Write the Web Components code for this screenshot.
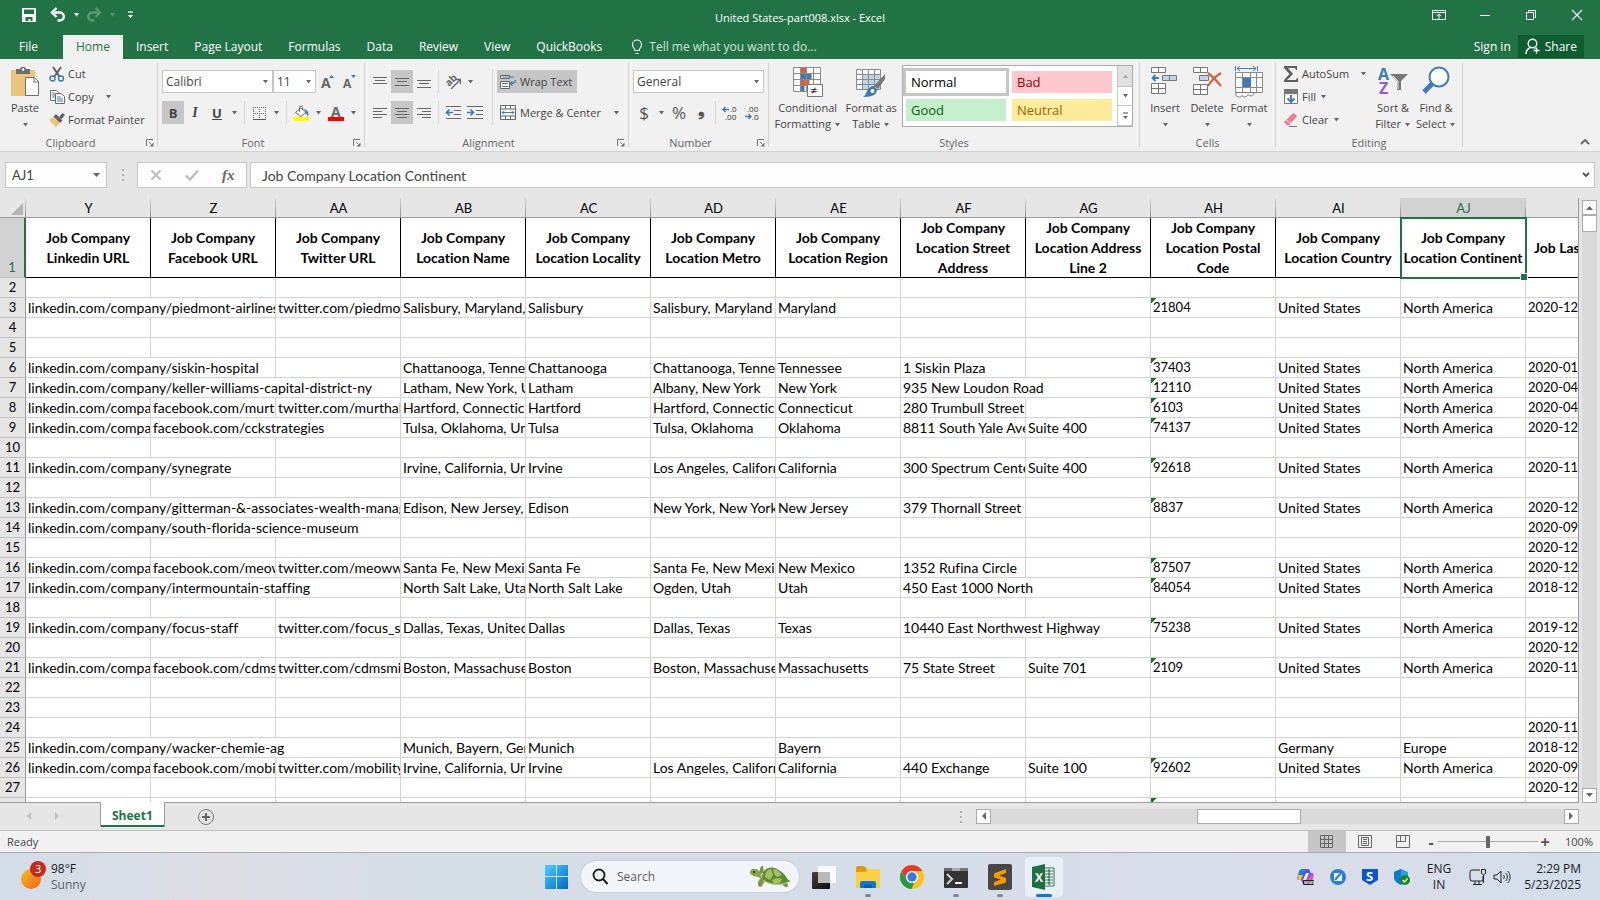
<!DOCTYPE html>
<html lang="en">
<head>
<meta charset="utf-8">
<title>United States-part008.xlsx - Excel</title>
<style>
html, body {
  height: 100%;
  margin: 0;
}
body {
  --ui: "Open Sans", "Noto Sans", sans-serif;
  --cell: Lato, "Open Sans", sans-serif;
  --green: #217346;
  font: 12px/16px var(--ui);
  color: #444;
  overflow: hidden;
}
</style>
</head>
<body>
<excel-window></excel-window>

<script>
const ICONS = {
  save: [16, 16, '<path d="M1 1h14v14H1z" fill="#fff"/><path d="M3 2.500h10v4.500H3zM4.500 10h7v4h-2v-2h-2v2h-3z" fill="#217346"/>'],
  undo: [16, 16, '<path d="M1.500 5.500H9.500a4.300 4 0 0 1 0 8H7.500" fill="none" stroke="#fff" stroke-width="2.400"/><path d="M6.500 1L2 5.500L6.500 10" fill="none" stroke="#fff" stroke-width="2.400"/>'],
  redo: [16, 16, '<g transform="matrix(-1 0 0 1 16 0)" opacity=".26" fill="none" stroke="#fff" stroke-width="2.400"><path d="M1.500 5.500H9.500a4.300 4 0 0 1 0 8H7.500M6.500 1L2 5.500L6.500 10"/></g>'],
  caret: [7, 4, '<path d="M1 0h5L3.500 3.500z" fill="currentColor"/>'],
  more: [7, 8, '<path d="M1 1h5" stroke="currentColor" stroke-width="1.200"/><path d="M1 4h5L3.500 7z" fill="currentColor"/>'],
  ribbonopts: [14, 12, '<path d="M.500 1.500h13v9H.500zM.500 3.500h13M7 10V5M5 7l2-2 2 2" fill="none" stroke="#fff"/>'],
  minimise: [12, 12, '<path d="M1 6.500h10" stroke="#fff"/>'],
  restore: [12, 12, '<path d="M1.500 3.500h7v7h-7zM3.500 3.500v-2h7v7h-2" fill="none" stroke="#fff"/>'],
  close: [12, 12, '<path d="M1 1l10 10M11 1L1 11" stroke="#fff" stroke-width="1.100"/>'],
  bulb: [12, 16, '<path d="M4 11.500c0-2-2.500-2.800-2.500-6a4.500 4.500 0 0 1 9 0c0 3.200-2.500 4-2.500 6zM4.500 14.500h3" fill="none" stroke="#fff" stroke-width="1.100"/>'],
  person: [16, 17, '<circle cx="7.500" cy="5.500" r="4.300" fill="none" stroke="#fff" stroke-width="1.400"/><path d="M1 16c0-4 2-5.500 4.500-6.500M9 9.500l1.500 1M11.500 9.500v6M8.500 12.500h6" fill="none" stroke="#fff" stroke-width="1.400"/>'],
  paste: [30, 32, '<path d="M1 4h24v26H1z" fill="#ecc57d"/><path d="M6 3h4c0-3 6-3 6 0h4v5H6z" fill="#6e6e6e"/><circle cx="13" cy="3.500" r="1.300" fill="#fff"/><path d="M15.500 11.500h9l4 4v14h-13z" fill="#fff" stroke="#6e6e6e"/><path d="M24 11.500v4.500h4.500" fill="none" stroke="#6e6e6e"/>'],
  cut: [16, 16, '<path d="M4 1l6.500 9.500M12 1L5.500 10.500" stroke="#5f5f5f" stroke-width="2"/><circle cx="3.500" cy="12.500" r="2.500" fill="none" stroke="#3f7ab3" stroke-width="1.400"/><circle cx="12" cy="12.500" r="2.500" fill="none" stroke="#3f7ab3" stroke-width="1.400"/>'],
  copy: [16, 16, '<path d="M1.500 1.500h6l2 2v8h-8z" fill="#fff" stroke="#6a6a6a"/><path d="M3 4h3M3 6h3M3 8h3" stroke="#3f7ab3"/><path d="M6.500 4.500h6l3 3v7h-9z" fill="#fff" stroke="#6a6a6a"/><path d="M8 8h4M8 10h6M8 12h6" stroke="#3f7ab3"/>'],
  painter: [16, 16, '<path d="M0 7.500l5-3 6 6-4 5z" fill="#ecc57d"/><path d="M4.500 4.500l2.500-2.500 6.500 6.500-2.500 2.500z" fill="#5f5f5f"/><path d="M10 5l3.500-4L16 3l-3.500 4z" fill="#5f5f5f"/>'],
  launcher: [8, 8, '<path d="M.500 7V.500H7M3 3l2.500 2.500" fill="none" stroke="#777"/><path d="M7.500 3.500v4h-4z" fill="#777"/>'],
  grow: [14, 16, '<text x="1" y="14" font-size="14" font-weight="700" fill="#666">A</text><path d="M9 4l2.500-3L14 4z" fill="#3f7ab3"/>'],
  shrink: [14, 16, '<text x="1" y="14" font-size="12" font-weight="700" fill="#666">A</text><path d="M9 1h5l-2.500 3z" fill="#3f7ab3"/>'],
  border: [14, 14, '<path d="M1 1.500h13M1 7.500h13M1.500 1v12M7.500 1v12M13.500 1v12" stroke="#666" stroke-dasharray="1 1"/><path d="M1 13.500h13" stroke="#555"/>'],
  bucket: [17, 16, '<path d="M7.500 3L2.500 7.500 8 11.500l5-4.500z" fill="#fff" stroke="#666"/><path d="M6.500 7V2.500a1.500 1.500 0 0 1 3 0V5" fill="none" stroke="#666"/><path d="M10.500 4c4 .500 6 3 4.500 8-1-3-2-3.500-3-4l1.500-1.500z" fill="#3f7ab3"/><path d="M0 12h16v4H0z" fill="#ff0"/>'],
  fontcolor: [16, 16, '<text x="3" y="12" font-size="14" font-weight="700" fill="#666">A</text><path d="M0 12h16v4H0z" fill="#f00"/>'],
  atop: [14, 14, '<path d="M0 2.500h14M2 5.500h10M0 8.500h14" stroke="#666"/>'],
  amid: [14, 14, '<path d="M0 3.500h14M2 6.500h10M0 10.500h14" stroke="#666"/>'],
  abot: [14, 14, '<path d="M0 5.500h14M2 8.500h10M0 12.500h14" stroke="#666"/>'],
  left: [14, 14, '<path d="M0 2.500h14M0 5.500h9M0 8.500h14M0 11.500h9" stroke="#666"/>'],
  center: [14, 14, '<path d="M0 2.500h14M2 5.500h10M0 8.500h14M2 11.500h10" stroke="#666"/>'],
  right: [14, 14, '<path d="M0 2.500h14M5 5.500h9M0 8.500h14M5 11.500h9" stroke="#666"/>'],
  orient: [16, 16, '<text x="1" y="10" font-size="10" font-weight="700" fill="#666" transform="rotate(-45 6 8)">ab</text><path d="M6 15l9-9M11 5.500h4.500V10" fill="none" stroke="#666" stroke-width="1.300"/>'],
  outdent: [16, 14, '<path d="M1 .500h15M9 4.500h7M9 8.500h7M1 12.500h15" stroke="#666"/><path d="M1 6.500h7M4.500 3.500l-3 3 3 3" fill="none" stroke="#3f7ab3" stroke-width="1.700"/>'],
  indent: [16, 14, '<path d="M0 .500h16M9 4.500h7M9 8.500h7M0 12.500h16" stroke="#666"/><path d="M0 6.500h7M3.500 3.500l3 3-3 3" fill="none" stroke="#3f7ab3" stroke-width="1.700"/>'],
  wrap: [16, 16, '<path d="M.500 1.500h9v3h-9zM.500 7.500h9v7h-9z" fill="#fff" stroke="#666"/><path d="M2 3h12M2 9.500h6M2 12.500h6" stroke="#3f7ab3"/><path d="M15.500 6c0 3-2 3.500-5 3.500M12.500 7.500l-2.500 2 2.500 2" fill="none" stroke="#3f7ab3" stroke-width="1.300"/>'],
  merge: [16, 16, '<path d="M.500.500h15v14H.500zM.500 4h15M.500 11h15M5.500 0v4M10.500 0v4M5.500 11v4M10.500 11v4" fill="#fff" stroke="#666"/><path d="M2 7.500h12M4 5.500l-2 2 2 2M12 5.500l2 2-2 2" fill="none" stroke="#3f7ab3"/>'],
  incdec: [16, 16, '<path d="M1 4.500h6M3.500 2L1 4.500 3.500 7" fill="none" stroke="#3f7ab3" stroke-width="1.400"/><text x="8" y="7" font-size="8" fill="#333">.0</text><text x="3" y="15" font-size="8" fill="#333">.00</text>'],
  decdec: [16, 16, '<path d="M1 11.500h6M4.500 9L7 11.500 4.500 14" fill="none" stroke="#3f7ab3" stroke-width="1.400"/><text x="3" y="7" font-size="8" fill="#333">.00</text><text x="8" y="15" font-size="8" fill="#333">.0</text>'],
  cond: [32, 32, '<path d="M1.500 1.500h27v24h-27z" fill="#fff"/><path d="M8.500 2h6v6h-6zM8.500 14h9v5h-9z" fill="#dc5f3c"/><path d="M8.500 8h11v6h-11zM8.500 19h4v6h-4z" fill="#3f7ab3"/><path d="M1.500 1.500h27v24h-27zM1.500 7.500h27M1.500 13.500h27M1.500 19.500h27M8.500 1.500v24M14.500 1.500v24M21.500 1.500v24" fill="none" stroke="#8b8b8b"/><path d="M15.500 18.500h15v12h-15z" fill="#fff" stroke="#777"/><text x="18.500" y="29" font-size="12" fill="#222">≠</text>'],
  fmttable: [32, 32, '<path d="M1.500 3.500h24v20h-24z" fill="#fff"/><path d="M8 9h17v14H8z" fill="#bfd3ea"/><path d="M1.500 3.500h24v20h-24zM1.500 8.500h24M1.500 13.500h24M1.500 18.500h24M7.500 3.500v20M13.500 3.500v20M19.500 3.500v20" fill="none" stroke="#8b8b8b"/><path d="M30 8v5l-7 10-4-3z" fill="#777"/><path d="M18 20l4 3c0 5-3 8-14 8 4-2 3-9 10-11z" fill="#3f7ab3"/><circle cx="17.500" cy="25" r="2" fill="#fff"/>'],
  insert: [30, 30, '<path d="M1.500 1.500h14v5h-14zM8.500 1.500v5M1.500 17.500h14v10h-14zM8.500 17.500v10M1.500 22.500h14" fill="#fff" stroke="#777"/><path d="M12.500 9.500h14v5h-14zM19.500 9.500v5" fill="#bfd3ea" stroke="#777"/><path d="M2 12h7M5.500 9L2.500 12l3 3" fill="none" stroke="#3f7ab3" stroke-width="1.800"/>'],
  delete: [30, 30, '<path d="M1.500 1.500h14v5h-14zM8.500 1.500v5M1.500 18.500h14v10h-14zM8.500 18.500v10M1.500 23.500h14" fill="#fff" stroke="#777"/><path d="M7.500 9.500h9v5h-9z" fill="#bfd3ea" stroke="#777"/><path d="M16 7c4 3 9 8 13 13M29 7c-5 3-10 8-13 13" fill="none" stroke="#dc5f3c" stroke-width="2.200"/>'],
  format: [30, 32, '<path d="M1.500 0v5M23.500 0v5M3 2.500h19M6 0L3 2.500 6 5M19 0l3 2.500L19 5" fill="none" stroke="#3f7ab3"/><path d="M1.500 6.500h27v20h-27zM1.500 11.500h27M1.500 21.500h27M8.500 6.500v20M16.500 6.500v20M22.500 6.500v20" fill="#fff" stroke="#8b8b8b"/><path d="M9 12h8v9H9z" fill="#3f7ab3"/><path d="M2 26.500h18c0 4-5 4-6 2-1 3-5 3-6 1-1 2-4 2-6 0z" fill="#fff" stroke="#777"/>'],
  sigma: [16, 16, '<path d="M1 0h13v4h-1l-1-2H5l5 6-6 6h9l1-2h1v4H1v-2l5.500-6L1 2z" fill="#5f5f5f"/>'],
  fill: [16, 16, '<path d="M1.500 1.500h13v13h-13z" fill="#fff" stroke="#777"/><path d="M1 0h14v5H1z" fill="#777"/><path d="M8 6v7M4.500 9.500L8 13l3.500-3.500" fill="none" stroke="#3f7ab3" stroke-width="2"/>'],
  clear: [16, 16, '<path d="M3.500 7.500L9 2c1-1 2-1 3 0l1.500 1.500c.500.500.500 1 0 1.500L8 11z" fill="#e8808f"/><path d="M3 8l4.500 4L6 13.500H4L1.500 11c-.500-.500-.500-1 0-1.500z" fill="#e8808f"/><path d="M6 14.500h8" stroke="#777"/>'],
  sort: [30, 30, '<text x="0" y="14" font-size="16" font-weight="700" fill="#3f7ab3">A</text><text x="1" y="28" font-size="16" font-weight="700" fill="#9260b8">Z</text><path d="M12 8h18l-7 7v9h-4v-9z" fill="#777"/><path d="M15 10l5 5v8" fill="none" stroke="#f1f1f1"/>'],
  find: [30, 30, '<path d="M11 18L3 26" stroke="#3f7ab3" stroke-width="5"/><circle cx="18" cy="11" r="9.500" fill="#fff" stroke="#3f7ab3" stroke-width="2"/>'],
  up: [10, 6, '<path d="M1 5l4-4 4 4" fill="none" stroke="#666" stroke-width="1.800"/>'],
  down: [8, 6, '<path d="M1 1l3 3 3-3" fill="none" stroke="#555" stroke-width="1.900"/>'],
  cancel: [12, 12, '<path d="M1.500 1.500l9 9M10.500 1.500l-9 9" stroke="#bdbdbd" stroke-width="2"/>'],
  enter: [14, 12, '<path d="M1 6.500l4 4L13 1.500" fill="none" stroke="#bdbdbd" stroke-width="2.400"/>'],
  corner: [14, 14, '<path d="M13 1v12H1z" fill="#b4b4b4"/>'],
  tup: [7, 5, '<path d="M0 5h7L3.500 1z" fill="#666"/>'],
  tdown: [7, 5, '<path d="M0 0h7L3.500 4z" fill="#666"/>'],
  tleft: [5, 9, '<path d="M5 0v8L1 4z" fill="currentColor"/>'],
  tright: [5, 9, '<path d="M0 0v8l4-4z" fill="currentColor"/>'],
  dots: [3, 12, '<path d="M1 0h2v2H1zM1 5h2v2H1zM1 10h2v2H1z" fill="#b0b0b0"/>'],
  add: [18, 18, '<circle cx="9" cy="9" r="7.500" fill="none" stroke="#777"/><path d="M9 5v8M5 9h8" stroke="#666" stroke-width="2"/>'],
  vnormal: [14, 14, '<path d="M.500.500h12v12H.500zM.500 4.500h12M.500 8.500h12M4.500.500v12M8.500.500v12" fill="none" stroke="#666"/>'],
  vpage: [14, 14, '<path d="M.500.500h13v12H.500zM3.500 2.500h7v8h-7zM5 4.500h4M5 6.500h4M5 8.500h4" fill="none" stroke="#666"/>'],
  vbreak: [14, 14, '<path d="M.500.500h13v12H.500zM4.500.500v6M9.500.500v6M.500 6.500h9" fill="none" stroke="#666"/>'],
  weather: [30, 32, '<defs><linearGradient id="g" x2="1" y2="1"><stop stop-color="#f5bd2c"/><stop offset="1" stop-color="#f2650f"/></linearGradient></defs><circle cx="11" cy="18" r="10" fill="url(#g)"/><circle cx="18" cy="8" r="8" fill="#c42b1c"/><text x="15" y="12" font-size="11" fill="#fff">3</text>'],
  windows: [24, 24, '<defs><linearGradient id="g" x2="1" y2="1"><stop stop-color="#4fd0fb"/><stop offset="1" stop-color="#0067c4"/></linearGradient></defs><path d="M1 0h11v11H1zM13 0h11v11H13zM1 12h11v12H1zM13 12h11v12H13z" fill="url(#g)"/>'],
  search: [16, 18, '<circle cx="7" cy="7" r="5.500" fill="none" stroke="#1e1e1e" stroke-width="1.800"/><path d="M11 11l4.500 5" stroke="#1e1e1e" stroke-width="2"/>'],
  turtle: [42, 24, '<path d="M12 8C9 3 2 2 1 7c0 4 5 4 8 5l4 2z" fill="#8ba04a"/><path d="M11 9C10 4 12 0 14 1l1 7zM12 13c-4 3-4 8-1 9 3 0 3-5 6-7zM32 17c2 4 5 7 7 4 0-3-2-4-5-6zM36 14l6 2-5 2z" fill="#7f9444"/><path d="M13 13C13 4 21 0 28 4c6 3 9 7 12 12-4 4-20 7-27-3z" fill="#5c8a32"/><path d="M16 12c0-5 3-8 6-8l2 6-3 5zM24 4c4 0 7 3 9 6l-5 2-3-3zM23 15l5-2 5 1-2 4-6 1z" fill="#a5c063"/><path d="M14 15c7 5 17 6 25 2" fill="none" stroke="#c9ce86"/><circle cx="5" cy="7" r="1" fill="#222"/>'],
  taskview: [26, 26, '<defs><linearGradient id="g" x2="1" y2="1"><stop stop-color="#444"/><stop offset="1" stop-color="#0b0b0b"/></linearGradient></defs><rect x="1" y="8" width="18" height="17" rx="1" fill="url(#g)"/><rect x="7" y="2" width="18" height="17" rx="1" fill="#fdfdfd" fill-opacity=".9"/><path d="M7 8h12v11H7z" fill="#b9b9b9"/>'],
  folder: [26, 26, '<path d="M1 4a2 2 0 0 1 2-2h6l3 3v4H1z" fill="#e09a08"/><path d="M1 8h9l3-3h11a1 1 0 0 1 1 1v17a1 1 0 0 1-1 1H2a1 1 0 0 1-1-1z" fill="#fdcf43"/><path d="M5 24v-5a2 2 0 0 1 2-2h12a2 2 0 0 1 2 2v5z" fill="#1177cf"/><path d="M9 21h8v3H9z" fill="#0a5aa8"/>'],
  chrome: [26, 26, '<circle cx="13" cy="13" r="12" fill="#fcc31e"/><path d="M13 1a12 12 0 0 1 10.400 6H13a6 6 0 0 0-5.200 9L2.600 7A12 12 0 0 1 13 1z" fill="#e33b2e"/><path d="M2.600 7l5.200 9A6 6 0 0 0 15 18.700L12.500 25A12 12 0 0 1 2.600 7z" fill="#219a4b"/><circle cx="13" cy="13" r="6" fill="#fff"/><circle cx="13" cy="13" r="4.700" fill="#3b78e7"/>'],
  terminal: [26, 26, '<rect x="1" y="4" width="24" height="20" rx="1" fill="#333"/><path d="M1 4h8v3H1z" fill="#6a6a6a"/><path d="M9 4h8v3H9z" fill="#aaa"/><path d="M17 4h8v3h-8z" fill="#777"/><path d="M4 10l5 5-5 5" fill="none" stroke="#ccc" stroke-width="2.200"/><path d="M12 19h7" stroke="#fff" stroke-width="2"/>'],
  sublime: [26, 26, '<rect x="1" y="0" width="24" height="26" rx="2" fill="#474747"/><path d="M7 9.500l12-4.500v4l-7 2.500 7 2.500v4.500L7 22v-4l7-2.500-7-2z" fill="#ff9800"/>'],
  excel: [26, 26, '<path d="M13 4h10v18H13z" fill="#fff" stroke="#217346"/><path d="M14 7h8M14 10h8M14 13h8M14 16h8M14 19h8M18 5v16" stroke="#217346" stroke-width="1.200"/><path d="M1 3l13-3v26L1 23z" fill="#1d7044"/><text x="4" y="18" font-size="12" font-weight="700" fill="#fff">X</text>'],
  copilot: [18, 18, '<defs><linearGradient id="g" x2="1" y2="1"><stop stop-color="#1aa5e8"/><stop offset=".4" stop-color="#3b58e0"/><stop offset=".7" stop-color="#e04fc0"/><stop offset="1" stop-color="#ff9a5a"/></linearGradient></defs><path d="M5 1h6c2 0 2 3 3 4h1c2 0 2 2 1.500 4L15 14c-.500 2-2 2-3 2H7c-2 0-2-3-3-4H2C0 12 0 9 1 7l1-4c.500-1.500 2-2 3-2z" fill="url(#g)"/><path d="M1 7h5l-2 5H2c-1.500-1-1-3-1-5z" fill="#f3c613"/><path d="M9 5h3l-3 7H6z" fill="#eef"/><rect x="6" y="12" width="11" height="5" rx="1" fill="#222"/><text x="7" y="16" font-size="4" font-weight="700" fill="#fff">M365</text>'],
  edit: [18, 18, '<circle cx="9" cy="9" r="8" fill="#2e7fd0"/><path d="M5 5h8v8H5z" fill="#eaf3fc"/><path d="M6 12l7-8" stroke="#2e7fd0" stroke-width="2"/>'],
  shield: [18, 18, '<path d="M1 1h16v11l-8 5-8-5z" fill="#0b55d0"/><text x="5" y="13" font-size="13" font-weight="700" fill="#fff">S</text>'],
  defender: [18, 18, '<path d="M8 1l7 3v5c0 4-3 6-7 8-4-2-7-4-7-8V4z" fill="#27a3e4"/><path d="M8 1v16c-4-2-7-4-7-8V4z" fill="#1479c4"/><circle cx="12" cy="12" r="5" fill="#118a20"/><path d="M9.500 12l2 2 3-3.500" fill="none" stroke="#fff" stroke-width="1.300"/>'],
  network: [18, 18, '<path d="M11 2H3a2 2 0 0 0-2 2v7a2 2 0 0 0 2 2h11V8M6 13v3M10 13v3M4 16.500h9M12.500 1.500h4v4l-2 1.500-2-1.500zM14.500 7v8" fill="none" stroke="#222"/>'],
  sound: [18, 18, '<path d="M1 7h3l4-4v12l-4-4H1zM10.500 7c1 1 1 3 0 4M12.500 5c2.500 2 2.500 6 0 8M14.500 3c3.500 3 3.500 9 0 12" fill="none" stroke="#222"/>']
}

// Shared rules for every push button drawn by the window
const BUTTONS = `
  * { box-sizing: border-box; }
  button {
    display: inline-flex;
    align-items: center;
    justify-content: center;
    margin: 0;
    padding: 0;
    border: 0;
    background: none;
    color: inherit;
    font: inherit;
  }
`

/**
 * Base element, clones its static html into an open shadow root.
 */
class ShadowElement extends HTMLElement {
  constructor () {
    super()
    const template = document.createElement('template')
    template.innerHTML = `<style>${BUTTONS}${this.constructor.css || ''}</style>${this.constructor.html || ''}`
    this.attachShadow({ mode: 'open' }).appendChild(template.content.cloneNode(true))
  }
}

customElements.define('x-icon',
  class extends ShadowElement {
    static css = ':host { display: inline-flex; flex: none; } svg { display: block; font-family: var(--ui); }'
    static html = '<slot></slot>'
    static observedAttributes = ['name']
    attributeChangedCallback (attribute, before, name) {
      const [w, h, body] = ICONS[name]
      const box = document.createElement('template')
      box.innerHTML = `<svg width="${w}" height="${h}" viewBox="0 0 ${w} ${h}" aria-hidden="true">${body}</svg>`
      this.shadowRoot.lastElementChild.replaceWith(box.content)
    }
  }
)

customElements.define('title-bar',
  class extends ShadowElement {
    static css = `
      :host {
        display: grid;
        grid-template-columns: 1fr auto 1fr;
        height: 35px;
        background: var(--green);
        color: #fff;
        font-size: 11px;
      }
      .quick, .window { display: flex; align-items: center; padding-bottom: 6px; }
      .quick { padding-left: 18px; }
      .quick button { width: 22px; height: 24px; }
      .quick .drop { width: 14px; }
      .quick .gap { margin-left: 7px; }
      .off { color: #599c78; }
      h1 { margin: 0; font: inherit; line-height: 35px; }
      .window { justify-content: flex-end; }
      .window button { width: 46px; height: 29px; }
    `
    static html = `
      <div class="quick">
        <button aria-label="Save"><x-icon name="save"></x-icon></button>
        <button class="gap" aria-label="Undo"><x-icon name="undo"></x-icon></button>
        <button class="drop" aria-label="Undo list"><x-icon name="caret"></x-icon></button>
        <button aria-label="Redo"><x-icon name="redo"></x-icon></button>
        <button class="drop off" aria-label="Redo list"><x-icon name="caret"></x-icon></button>
        <button aria-label="Customize toolbar"><x-icon name="more"></x-icon></button>
      </div>
      <h1>United States-part008.xlsx - Excel</h1>
      <div class="window">
        <button aria-label="Ribbon display options"><x-icon name="ribbonopts"></x-icon></button>
        <button aria-label="Minimize"><x-icon name="minimise"></x-icon></button>
        <button aria-label="Restore"><x-icon name="restore"></x-icon></button>
        <button aria-label="Close"><x-icon name="close"></x-icon></button>
      </div>
    `
  }
)

customElements.define('ribbon-tabs',
  class extends ShadowElement {
    static css = `
      :host {
        display: flex;
        height: 24px;
        background: var(--green);
        color: #fff;
      }
      button { padding: 0 13px; height: 24px; }
      .file { width: 63px; padding: 0 6px 0 0; }
      .on { background: #f1f1f1; color: var(--green); }
      .tell { gap: 6px; padding-left: 16px; color: #cfe5d8; }
      .sign { margin-left: auto; padding: 0 7px; }
      .share { height: 23px; padding: 0 7px; margin-right: 16px; gap: 4px; background: #0e5c2f; }
    `
    static html = `
      <button class="file">File</button>
      <button class="on">Home</button>
      <button>Insert</button>
      <button>Page Layout</button>
      <button>Formulas</button>
      <button>Data</button>
      <button>Review</button>
      <button>View</button>
      <button>QuickBooks</button>
      <button class="tell"><x-icon name="bulb"></x-icon>Tell me what you want to do...</button>
      <button class="sign">Sign in</button>
      <button class="share"><x-icon name="person"></x-icon>Share</button>
    `
  }
)

customElements.define('ribbon-group',
  class extends ShadowElement {
    static css = `
      :host {
        display: flex;
        flex: none;
        flex-direction: column;
        position: relative;
        padding: 0 4px;
        border-right: 1px solid #d2d2d2;
      }
      .body { display: flex; flex: 1; min-height: 0; }
      footer { padding-right: 16px; text-align: center; line-height: 8px; color: #666; }
      button { position: absolute; right: 3px; bottom: 0; }
      :host([plain]) footer { padding: 0; }
      :host([plain]) button { display: none; }
    `
    static html = `
      <div class="body"><slot></slot></div>
      <footer><span></span><button aria-label="More settings"><x-icon name="launcher"></x-icon></button></footer>
    `
    connectedCallback () {
      this.shadowRoot.querySelector('span').textContent = this.getAttribute('label')
    }
  }
)

customElements.define('combo-box',
  class extends ShadowElement {
    static css = `
      :host { display: block; position: relative; height: 23px; font-size: 12px; }
      select {
        width: 100%;
        height: 100%;
        padding: 0 3px;
        border: 1px solid #c6c6c6;
        border-radius: 0;
        background: #fff;
        color: #444;
        font: inherit;
        appearance: none;
      }
      x-icon { position: absolute; right: 4px; top: 10px; color: #666; pointer-events: none; }
    `
    static html = '<select><option></option></select><x-icon name="caret"></x-icon>'
    connectedCallback () {
      const select = this.shadowRoot.querySelector('select')
      select.setAttribute('aria-label', this.getAttribute('label'))
      select.options[0].textContent = this.getAttribute('value')
    }
  }
)

customElements.define('big-button',
  class extends ShadowElement {
    static css = `
      :host { display: block; }
      button { flex-direction: column; justify-content: flex-start; width: 100%; padding-top: 3px; }
      .pic { height: 34px; display: flex; align-items: flex-start; justify-content: center; }
      span { white-space: nowrap; line-height: 16px; text-align: center; }
      .tail { color: #666; height: 16px; }
      .tail b { font-weight: 400; color: #444; }
      .tail x-icon { vertical-align: middle; }
    `
    static html = `
      <button>
        <div class="pic"><x-icon></x-icon></div>
        <span class="one"></span>
        <span class="tail"><b></b> <x-icon name="caret"></x-icon></span>
      </button>
    `
    connectedCallback () {
      this.shadowRoot.querySelector('.pic x-icon').setAttribute('name', this.getAttribute('icon'))
      this.shadowRoot.querySelector('.one').textContent = this.getAttribute('one')
      this.shadowRoot.querySelector('b').textContent = this.getAttribute('two') || ''
    }
  }
)

customElements.define('excel-ribbon',
  class extends ShadowElement {
    static css = `
      :host {
        display: flex;
        height: 93px;
        padding: 4px 0;
        background: #f1f1f1;
        border-bottom: 1px solid #d2d2d2;
        font-size: 11px;
      }
      ribbon-group { height: 84px; }
      .list { display: flex; flex-direction: column; margin-top: -1px; }
      .list button { height: 23px; justify-content: flex-start; gap: 3px; white-space: nowrap; }
      .list .drop { margin-left: 8px; }
      .near { margin-left: 1px; }
      .rows { display: flex; flex-direction: column; gap: 8px; padding-top: 7px; }
      .row { display: flex; height: 23px; }
      .row button { width: 22px; }
      .row .drop { width: 13px; }
      .row .wide { width: auto; padding: 0 5px 0 3px; gap: 4px; white-space: nowrap; }
      .wide + .drop { margin-left: 4px; }
      .on { background: #c6c6c6; }
      .sep { width: 1px; margin: 0 3px; background: #d8d8d8; }
      .tall { height: 56px; margin: 6px 4px 0 6px; }
      .sign { font-size: 17px; color: #555; }
      .bold { font-weight: 700; font-size: 13px; }
      .comma { padding-bottom: 8px; font-weight: 700; font-size: 17px; color: #555; }
      .ital { font: italic 700 14px "Liberation Serif", serif; }
      .under { font-weight: 700; font-size: 13px; text-decoration: underline; }
      x-icon[name=caret] { color: #666; }
      .gallery {
        display: grid;
        grid-template-columns: 214px 15px;
        height: 62px;
        margin: 2px 2px 0 2px;
        border: 1px solid #ababab;
        background: #fff;
      }
      .swatches { display: grid; grid-template-columns: 100px 100px; grid-auto-rows: 22px; gap: 6px; padding: 5px 3px; }
      .swatches button { justify-content: flex-start; padding-left: 5px; font-size: 13px; }
      .normal { color: #000; outline: 3px solid #c6c6c6; }
      .bad { background: #ffc7ce; color: #9c0006; }
      .good { background: #c6efce; color: #006100; }
      .neutral { background: #ffeb9c; color: #9c6500; }
      .steps { display: grid; grid-template-rows: 21px 19px 20px; border-left: 1px solid #c6c6c6; color: #666; }
      .steps button { border-bottom: 1px solid #c6c6c6; }
      .steps button:first-child { background: #e1e1e1; color: #aaa; }
      .flip { transform: scaleY(-1); }
      .hide { margin: auto 10px 2px auto; }
    `
    static html = `
      <ribbon-group label="Clipboard" style="width:158px">
        <big-button icon="paste" one="Paste" style="width:42px"></big-button>
        <div class="list" style="margin-left:3px">
          <button><x-icon name="cut"></x-icon>Cut</button>
          <button><x-icon name="copy"></x-icon>Copy<x-icon class="drop" name="caret"></x-icon></button>
          <button><x-icon name="painter"></x-icon>Format Painter</button>
        </div>
      </ribbon-group>

      <ribbon-group label="Font" style="width:207px">
        <div class="rows">
          <div class="row">
            <combo-box label="Font" value="Calibri" style="width:111px"></combo-box>
            <combo-box label="Font size" value="11" style="width:43px"></combo-box>
            <button aria-label="Increase font size"><x-icon name="grow"></x-icon></button>
            <button aria-label="Decrease font size"><x-icon name="shrink"></x-icon></button>
          </div>
          <div class="row">
            <button class="on bold">B</button>
            <button class="ital">I</button>
            <button class="under">U</button>
            <button class="drop" aria-label="Underline styles"><x-icon name="caret"></x-icon></button>
            <div class="sep"></div>
            <button aria-label="Borders"><x-icon name="border"></x-icon></button>
            <button class="drop" aria-label="Border styles"><x-icon name="caret"></x-icon></button>
            <div class="sep"></div>
            <button aria-label="Fill color"><x-icon name="bucket"></x-icon></button>
            <button class="drop" aria-label="Fill colors"><x-icon name="caret"></x-icon></button>
            <button aria-label="Font color"><x-icon name="fontcolor"></x-icon></button>
            <button class="drop" aria-label="Font colors"><x-icon name="caret"></x-icon></button>
          </div>
        </div>
      </ribbon-group>

      <ribbon-group label="Alignment" style="width:264px">
        <div class="rows">
          <div class="row">
            <button aria-label="Top align"><x-icon name="atop"></x-icon></button>
            <button class="on" aria-label="Middle align"><x-icon name="amid"></x-icon></button>
            <button aria-label="Bottom align"><x-icon name="abot"></x-icon></button>
            <div class="sep"></div>
            <button aria-label="Orientation"><x-icon name="orient"></x-icon></button>
            <button class="drop" aria-label="Orientation list"><x-icon name="caret"></x-icon></button>
          </div>
          <div class="row">
            <button aria-label="Align left"><x-icon name="left"></x-icon></button>
            <button class="on" aria-label="Center"><x-icon name="center"></x-icon></button>
            <button aria-label="Align right"><x-icon name="right"></x-icon></button>
            <div class="sep"></div>
            <button aria-label="Decrease indent"><x-icon name="outdent"></x-icon></button>
            <button aria-label="Increase indent"><x-icon name="indent"></x-icon></button>
          </div>
        </div>
        <div class="sep tall"></div>
        <div class="rows">
          <div class="row"><button class="wide on"><x-icon name="wrap"></x-icon>Wrap Text</button></div>
          <div class="row">
            <button class="wide"><x-icon name="merge"></x-icon>Merge &amp; Center</button>
            <button class="drop" aria-label="Merge list"><x-icon name="caret"></x-icon></button>
          </div>
        </div>
      </ribbon-group>

      <ribbon-group label="Number" style="width:140px">
        <div class="rows">
          <div class="row"><combo-box label="Number format" value="General" style="width:131px"></combo-box></div>
          <div class="row">
            <button class="sign" aria-label="Accounting format">$</button>
            <button class="drop" aria-label="Currency list"><x-icon name="caret"></x-icon></button>
            <button class="sign" aria-label="Percent">%</button>
            <button class="comma" aria-label="Comma style">❟</button>
            <div class="sep"></div>
            <button aria-label="Increase decimal"><x-icon name="incdec"></x-icon></button>
            <button aria-label="Decrease decimal"><x-icon name="decdec"></x-icon></button>
          </div>
        </div>
      </ribbon-group>

      <ribbon-group label="Styles" plain style="width:371px">
        <big-button icon="cond" one="Conditional" two="Formatting" style="width:71px"></big-button>
        <big-button icon="fmttable" one="Format as" two="Table" style="width:59px"></big-button>
        <div class="gallery">
          <div class="swatches">
            <button class="normal">Normal</button>
            <button class="bad">Bad</button>
            <button class="good">Good</button>
            <button class="neutral">Neutral</button>
          </div>
          <div class="steps">
            <button aria-label="Previous styles"><x-icon class="flip" name="caret" style="color:inherit"></x-icon></button>
            <button aria-label="Next styles"><x-icon name="caret"></x-icon></button>
            <button aria-label="All styles"><x-icon name="more"></x-icon></button>
          </div>
        </div>
      </ribbon-group>

      <ribbon-group label="Cells" plain style="width:136px">
        <big-button icon="insert" one="Insert" style="width:42px"></big-button>
        <big-button icon="delete" one="Delete" style="width:42px"></big-button>
        <big-button icon="format" one="Format" style="width:42px"></big-button>
      </ribbon-group>

      <ribbon-group label="Editing" plain style="width:187px">
        <div class="list" style="width:92px;padding-left:3px">
          <button><x-icon name="sigma"></x-icon>AutoSum<x-icon class="drop" name="caret"></x-icon></button>
          <button><x-icon name="fill"></x-icon>Fill<x-icon class="near" name="caret"></x-icon></button>
          <button><x-icon name="clear"></x-icon>Clear<x-icon class="near" name="caret"></x-icon></button>
        </div>
        <big-button icon="sort" one="Sort &amp;" two="Filter" style="width:42px"></big-button>
        <big-button icon="find" one="Find &amp;" two="Select" style="width:44px"></big-button>
      </ribbon-group>
      <button class="hide" aria-label="Collapse the ribbon"><x-icon name="up"></x-icon></button>
    `
  }
)

customElements.define('formula-bar',
  class extends ShadowElement {
    static css = `
      :host {
        display: flex;
        gap: 3px;
        padding: 10px 5px;
        background: #e6e6e6;
        font: 14px var(--cell);
      }
      .name, .tools, .formula { height: 26px; border: 1px solid #c6c6c6; background: #fdfdfd; display: flex; align-items: center; }
      input { width: 100%; min-width: 0; padding: 0; border: 0; background: none; color: #444; font: inherit; outline: 0; }
      .name { width: 102px; padding: 0 6px; color: #666; }
      .name input { font-size: 13px; }
      .grip { width: 24px; display: flex; align-items: center; justify-content: center; }
      .tools { width: 110px; justify-content: space-around; }
      .fx { font: italic 700 15px "Liberation Serif", serif; color: #666; }
      .formula { flex: 1; padding: 0 4px 0 11px; }
    `
    static html = `
      <div class="name"><input aria-label="Name box" value="AJ1"><button aria-label="Names"><x-icon name="tdown"></x-icon></button></div>
      <div class="grip"><x-icon name="dots"></x-icon></div>
      <div class="tools">
        <button aria-label="Cancel"><x-icon name="cancel"></x-icon></button>
        <button aria-label="Enter"><x-icon name="enter"></x-icon></button>
        <button class="fx" aria-label="Insert function">fx</button>
      </div>
      <div class="formula"><input aria-label="Formula" value="Job Company Location Continent"><button aria-label="Expand formula bar"><x-icon name="down"></x-icon></button></div>
    `
  }
)

const COLUMNS = ['Y', 'Z', 'AA', 'AB', 'AC', 'AD', 'AE', 'AF', 'AG', 'AH', 'AI', 'AJ', '']
const HEADINGS = [
  'Job Company\nLinkedin URL', 'Job Company\nFacebook URL', 'Job Company\nTwitter URL',
  'Job Company\nLocation Name', 'Job Company\nLocation Locality', 'Job Company\nLocation Metro',
  'Job Company\nLocation Region', 'Job Company\nLocation Street\nAddress', 'Job Company\nLocation Address\nLine 2',
  'Job Company\nLocation Postal\nCode', 'Job Company\nLocation Country', 'Job Company\nLocation Continent',
  'Job Last Updated'
]
const US = ['United States', 'North America']
// Cells of a row from column Y on, '>' lets the text before it run on into an empty cell
const ROWS = {
  3: ['linkedin.com/company/piedmont-airlines', '>', 'twitter.com/piedmontair', 'Salisbury, Maryland, United States', 'Salisbury', 'Salisbury, Maryland', 'Maryland', '', '', '21804', ...US, '2020-12-01'],
  6: ['linkedin.com/company/siskin-hospital', '>', '', 'Chattanooga, Tennessee', 'Chattanooga', 'Chattanooga, Tennessee', 'Tennessee', '1 Siskin Plaza', '', '37403', ...US, '2020-01-01'],
  7: ['linkedin.com/company/keller-williams-capital-district-ny', '>', '>', 'Latham, New York, United States', 'Latham', 'Albany, New York', 'New York', '935 New Loudon Road', '>', '12110', ...US, '2020-04-01'],
  8: ['linkedin.com/company', 'facebook.com/murtha', 'twitter.com/murthalaw', 'Hartford, Connecticut', 'Hartford', 'Hartford, Connecticut', 'Connecticut', '280 Trumbull Street', '', '6103', ...US, '2020-04-01'],
  9: ['linkedin.com/company', 'facebook.com/cckstrategies', '>', 'Tulsa, Oklahoma, United States', 'Tulsa', 'Tulsa, Oklahoma', 'Oklahoma', '8811 South Yale Avenue', 'Suite 400', '74137', ...US, '2020-12-01'],
  11: ['linkedin.com/company/synegrate', '>', '', 'Irvine, California, United States', 'Irvine', 'Los Angeles, California', 'California', '300 Spectrum Center', 'Suite 400', '92618', ...US, '2020-11-01'],
  13: ['linkedin.com/company/gitterman-&-associates-wealth-management', '>', '>', 'Edison, New Jersey, United States', 'Edison', 'New York, New York', 'New Jersey', '379 Thornall Street', '', '8837', ...US, '2020-12-01'],
  14: ['linkedin.com/company/south-florida-science-museum', '>', '>', '', '', '', '', '', '', '', '', '', '2020-09-01'],
  15: ['', '', '', '', '', '', '', '', '', '', '', '', '2020-12-01'],
  16: ['linkedin.com/company', 'facebook.com/meowwolf', 'twitter.com/meowwolf', 'Santa Fe, New Mexico', 'Santa Fe', 'Santa Fe, New Mexico', 'New Mexico', '1352 Rufina Circle', '', '87507', ...US, '2020-12-01'],
  17: ['linkedin.com/company/intermountain-staffing', '>', '>', 'North Salt Lake, Utah', 'North Salt Lake', 'Ogden, Utah', 'Utah', '450 East 1000 North', '>', '84054', ...US, '2018-12-01'],
  19: ['linkedin.com/company/focus-staff', '>', 'twitter.com/focus_staff', 'Dallas, Texas, United States', 'Dallas', 'Dallas, Texas', 'Texas', '10440 East Northwest Highway', '>', '75238', ...US, '2019-12-01'],
  20: ['', '', '', '', '', '', '', '', '', '', '', '', '2020-12-01'],
  21: ['linkedin.com/company', 'facebook.com/cdmsmith', 'twitter.com/cdmsmith', 'Boston, Massachusetts', 'Boston', 'Boston, Massachusetts', 'Massachusetts', '75 State Street', 'Suite 701', '2109', ...US, '2020-11-01'],
  24: ['', '', '', '', '', '', '', '', '', '', '', '', '2020-11-01'],
  25: ['linkedin.com/company/wacker-chemie-ag', '>', '>', 'Munich, Bayern, Germany', 'Munich', '', 'Bayern', '', '', '', 'Germany', 'Europe', '2018-12-01'],
  26: ['linkedin.com/company', 'facebook.com/mobility', 'twitter.com/mobility', 'Irvine, California, United States', 'Irvine', 'Los Angeles, California', 'California', '440 Exchange', 'Suite 100', '92602', ...US, '2020-09-01'],
  27: ['', '', '', '', '', '', '', '', '', '', '', '', '2020-12-01'],
  28: ['', '', '', '', '', '', '', '', '', ' ', '', '', '']
}

customElements.define('sheet-grid',
  class extends ShadowElement {
    static css = `
      :host {
        display: block;
        min-height: 0;
        overflow: hidden;
        border-right: 1px solid #9b9b9b;
        border-bottom: 1px solid #9b9b9b;
        background: #fff;
        color: #000;
        font: 14px var(--cell);
        font-variant-ligatures: no-common-ligatures;
      }
      table { width: 1651px; table-layout: fixed; border-collapse: separate; border-spacing: 0; }
      col { width: 125px; }
      col:first-child { width: 26px; }
      tr { height: 20px; }
      th, td { padding: 0; line-height: 19px; overflow: hidden; white-space: nowrap; }
      th { font-weight: 400; font-size: 13px; background: #e6e6e6; }
      thead th {
        height: 20px;
        border-bottom: 1px solid #9b9b9b;
        background: linear-gradient(#d8d8d8, #909090) right / 1px 100% no-repeat #e6e6e6;
        line-height: 18px;
      }
      thead .sel { background-color: #d2d2d2; color: var(--green); }
      thead th:first-child { padding-right: 2px; text-align: right; }
      thead x-icon { vertical-align: middle; }
      tbody th { border-right: 1px solid #9b9b9b; border-bottom: 1px solid #c0c0c0; vertical-align: bottom; }
      td { padding-left: 2px; border-right: 1px solid #d4d4d4; border-bottom: 1px solid #d4d4d4; }
      .num { font-size: 13px; }
      .err { background: linear-gradient(135deg, #107c10 4px, transparent 4px) 0 0 / 6px 6px no-repeat; }
      .head { height: 60px; }
      .head th { background: #d2d2d2; color: var(--green); border-right: 2px solid var(--green); }
      .head td {
        padding: 0;
        border-color: #000;
        border-bottom: 0;
        box-shadow: inset 0 -1px #000;
        font-weight: 700;
        line-height: 20px;
        text-align: center;
        white-space: pre;
      }
      .head .sel { position: relative; overflow: visible; }
      .sel::before {
        position: absolute;
        inset: -1px -2px -1px -1px;
        border: 2px solid var(--green);
      }
      .sel::after {
        position: absolute;
        right: -3px;
        bottom: -3px;
        width: 6px;
        height: 6px;
        border: 1px solid #fff;
        background: var(--green);
      }
      td.sel::before, td.sel::after { content: ""; }
    `
    static html = `
      <table>
        <colgroup></colgroup>
        <thead><tr><th><x-icon name="corner"></x-icon></th></tr></thead>
        <tbody></tbody>
      </table>
    `
    connectedCallback () {
      const root = this.shadowRoot
      root.querySelector('colgroup').innerHTML = '<col>'.repeat(COLUMNS.length + 1)
      const top = root.querySelector('thead tr')
      COLUMNS.forEach(name => {
        const th = document.createElement('th')
        th.textContent = name
        th.classList.toggle('sel', name === 'AJ')
        top.append(th)
      })
      for (let n = 1; n <= 28; n++) {
        root.querySelector('tbody').append(this.buildRow(n))
      }
    }

    /**
     * Builds one row of the sheet.
     *
     * @param {number} n - The row number.
     */
    buildRow (n) {
      const cells = n === 1 ? HEADINGS : ROWS[n] || COLUMNS.map(() => '')
      const tr = document.createElement('tr')
      const th = document.createElement('th')
      th.textContent = n
      tr.append(th)
      if (n === 1) tr.className = 'head'
      cells.forEach((text, i) => {
        if (text === '>') {
          tr.lastChild.colSpan += 1
          return
        }
        const td = document.createElement('td')
        td.textContent = text
        td.classList.toggle('num', /^[\d-]+$/.test(text))
        td.classList.toggle('err', COLUMNS[i] === 'AH' && text !== '' && n > 1)
        td.classList.toggle('sel', COLUMNS[i] === 'AJ' && n === 1)
        tr.append(td)
      })
      return tr
    }
  }
)

customElements.define('scroll-bar',
  class extends ShadowElement {
    static css = `
      :host { display: flex; background: #dadada; color: #666; }
      :host([vertical]) { flex-direction: column; width: 15px; }
      button { flex: none; width: 15px; height: 15px; border: 1px solid #ababab; background: #fff; }
      .track { flex: 1; display: flex; }
      .thumb { border: 1px solid #ababab; background: #fff; }
      :host([vertical]) .thumb { width: 15px; height: 17px; }
      :host(:not([vertical])) .thumb { width: 104px; margin-left: 36%; }
    `
    static html = `
      <button><x-icon></x-icon></button>
      <div class="track"><div class="thumb"></div></div>
      <button><x-icon></x-icon></button>
    `
    connectedCallback () {
      const sides = this.hasAttribute('vertical') ? ['up', 'down'] : ['left', 'right']
      this.shadowRoot.querySelectorAll('button').forEach((button, i) => {
        button.setAttribute('aria-label', `Scroll ${sides[i]}`)
        button.firstChild.setAttribute('name', `t${sides[i]}`)
      })
    }
  }
)

customElements.define('sheet-tabs',
  class extends ShadowElement {
    static css = `
      :host {
        display: flex;
        height: 28px;
        background: #e6e6e6;
        border-bottom: 1px solid #c0c0c0;
        color: #c0c0c0;
      }
      .nav { display: flex; align-items: center; gap: 24px; width: 100px; padding-left: 26px; }
      .tab {
        height: 25px;
        margin-top: -1px;
        padding: 2px 11px 0;
        border: solid #9b9b9b;
        border-width: 0 1px;
        background: #fff;
        box-shadow: inset 0 -2px var(--green);
        color: var(--green);
        font-weight: 700;
      }
      .add { width: 82px; }
      .grip { margin: 8px 14px 0 auto; }
      scroll-bar { width: 603px; height: 15px; margin: 6px 21px 0 0; }
    `
    static html = `
      <div class="nav">
        <button aria-label="Previous sheet"><x-icon name="tleft"></x-icon></button>
        <button aria-label="Next sheet"><x-icon name="tright"></x-icon></button>
      </div>
      <button class="tab">Sheet1</button>
      <button class="add" aria-label="New sheet"><x-icon name="add"></x-icon></button>
      <x-icon class="grip" name="dots"></x-icon>
      <scroll-bar></scroll-bar>
    `
  }
)

customElements.define('status-bar',
  class extends ShadowElement {
    static css = `
      :host {
        display: flex;
        align-items: center;
        height: 22px;
        padding: 0 7px;
        background: #f1f1f1;
        border-bottom: 1px solid #ababab;
        font-size: 11px;
      }
      span { flex: 1; }
      .view { width: 38px; height: 21px; }
      .on { background: #c6c6c6; }
      .step { width: 14px; font: 700 16px/16px var(--ui); color: #555; }
      input { width: 100px; height: 14px; margin: 0; appearance: none; background: linear-gradient(#ababab, #ababab) center / 100% 1px no-repeat; }
      input::-webkit-slider-thumb { appearance: none; width: 4px; height: 12px; background: #666; }
      output { width: 41px; text-align: right; }
      .view + .step { margin-left: 2px; }
    `
    static html = `
      <span>Ready</span>
      <button class="view on" aria-label="Normal view"><x-icon name="vnormal"></x-icon></button>
      <button class="view" aria-label="Page layout view"><x-icon name="vpage"></x-icon></button>
      <button class="view" aria-label="Page break preview"><x-icon name="vbreak"></x-icon></button>
      <button class="step" aria-label="Zoom out">-</button>
      <input type="range" aria-label="Zoom">
      <button class="step" aria-label="Zoom in">+</button>
      <output>100%</output>
    `
  }
)

customElements.define('task-bar',
  class extends ShadowElement {
    static css = `
      :host {
        display: grid;
        grid-template-columns: 1fr auto 1fr;
        height: 47px;
        background: linear-gradient(90deg, #d3dde8, #dedde4 14%, #d5dde7 26%, #d5dde8 60%, #dadde9 80%, #d3deea);
        color: #1c1c1c;
      }
      .weather { display: flex; align-items: center; padding-left: 20px; }
      .weather button { gap: 1px; text-align: left; }
      small { display: block; font-size: 12px; color: #5b5f66; }
      .apps { display: flex; align-items: center; }
      .app { position: relative; width: 38px; height: 40px; margin: 0 3px; border-radius: 4px; }
      .app::after { position: absolute; bottom: 0; width: 6px; height: 3px; border-radius: 2px; background: #85898f; }
      .run::after { content: ""; }
      .now { background: #eaeff7; }
      .now::after { width: 16px; background: #0a78d4; }
      label {
        display: flex;
        align-items: center;
        gap: 9px;
        width: 218px;
        height: 31px;
        margin: 0 3px;
        padding: 0 8px 0 11px;
        border-radius: 16px;
        background: #f2f5fa;
        box-shadow: 0 0 0 1px #c8cfdb;
      }
      input { flex: 1; min-width: 0; padding: 0; border: 0; background: none; font: inherit; outline: 0; }
      input::placeholder { color: #5c5c5c; opacity: 1; }
      .tray { display: flex; align-items: center; justify-content: flex-end; padding-right: 19px; }
      .tray > button { width: 32px; height: 40px; }
      .lang { width: 42px; margin-right: 6px; text-align: center; }
      .tray .small { width: 24px; }
      .clock { width: 67px; text-align: right; white-space: nowrap; }
    `
    static html = `
      <div class="weather"><button><x-icon name="weather"></x-icon><span>98°F<small>Sunny</small></span></button></div>
      <div class="apps">
        <button class="app" aria-label="Start"><x-icon name="windows"></x-icon></button>
        <label><x-icon name="search"></x-icon><input placeholder="Search" aria-label="Search"><x-icon name="turtle"></x-icon></label>
        <button class="app" aria-label="Task view"><x-icon name="taskview"></x-icon></button>
        <button class="app run" aria-label="File Explorer"><x-icon name="folder"></x-icon></button>
        <button class="app" aria-label="Chrome"><x-icon name="chrome"></x-icon></button>
        <button class="app run" aria-label="Terminal"><x-icon name="terminal"></x-icon></button>
        <button class="app run" aria-label="Sublime Text"><x-icon name="sublime"></x-icon></button>
        <button class="app run now" aria-label="Excel"><x-icon name="excel"></x-icon></button>
      </div>
      <div class="tray">
        <button aria-label="Copilot"><x-icon name="copilot"></x-icon></button>
        <button aria-label="Notes"><x-icon name="edit"></x-icon></button>
        <button aria-label="Antivirus"><x-icon name="shield"></x-icon></button>
        <button aria-label="Windows Security"><x-icon name="defender"></x-icon></button>
        <div class="lang">ENG<br>IN</div>
        <button class="small" aria-label="Network"><x-icon name="network"></x-icon></button>
        <button class="small" aria-label="Volume"><x-icon name="sound"></x-icon></button>
        <div class="clock">2:29 PM<br>5/23/2025</div>
      </div>
    `
  }
)

customElements.define('excel-window',
  class extends ShadowElement {
    static css = `
      :host { display: flex; flex-direction: column; height: 100vh; }
      main { display: flex; flex: 1; min-height: 0; background: #e6e6e6; }
      sheet-grid { flex: 1; min-width: 0; }
      title-bar, ribbon-tabs, excel-ribbon, formula-bar, sheet-tabs, status-bar, task-bar { flex: none; }
      .side { display: flex; padding: 2px 3px 0; }
    `
    static html = `
      <title-bar></title-bar>
      <ribbon-tabs></ribbon-tabs>
      <excel-ribbon></excel-ribbon>
      <formula-bar></formula-bar>
      <main><sheet-grid></sheet-grid><div class="side"><scroll-bar vertical></scroll-bar></div></main>
      <sheet-tabs></sheet-tabs>
      <status-bar></status-bar>
      <task-bar></task-bar>
    `
  }
)
</script>
</body>
</html>
